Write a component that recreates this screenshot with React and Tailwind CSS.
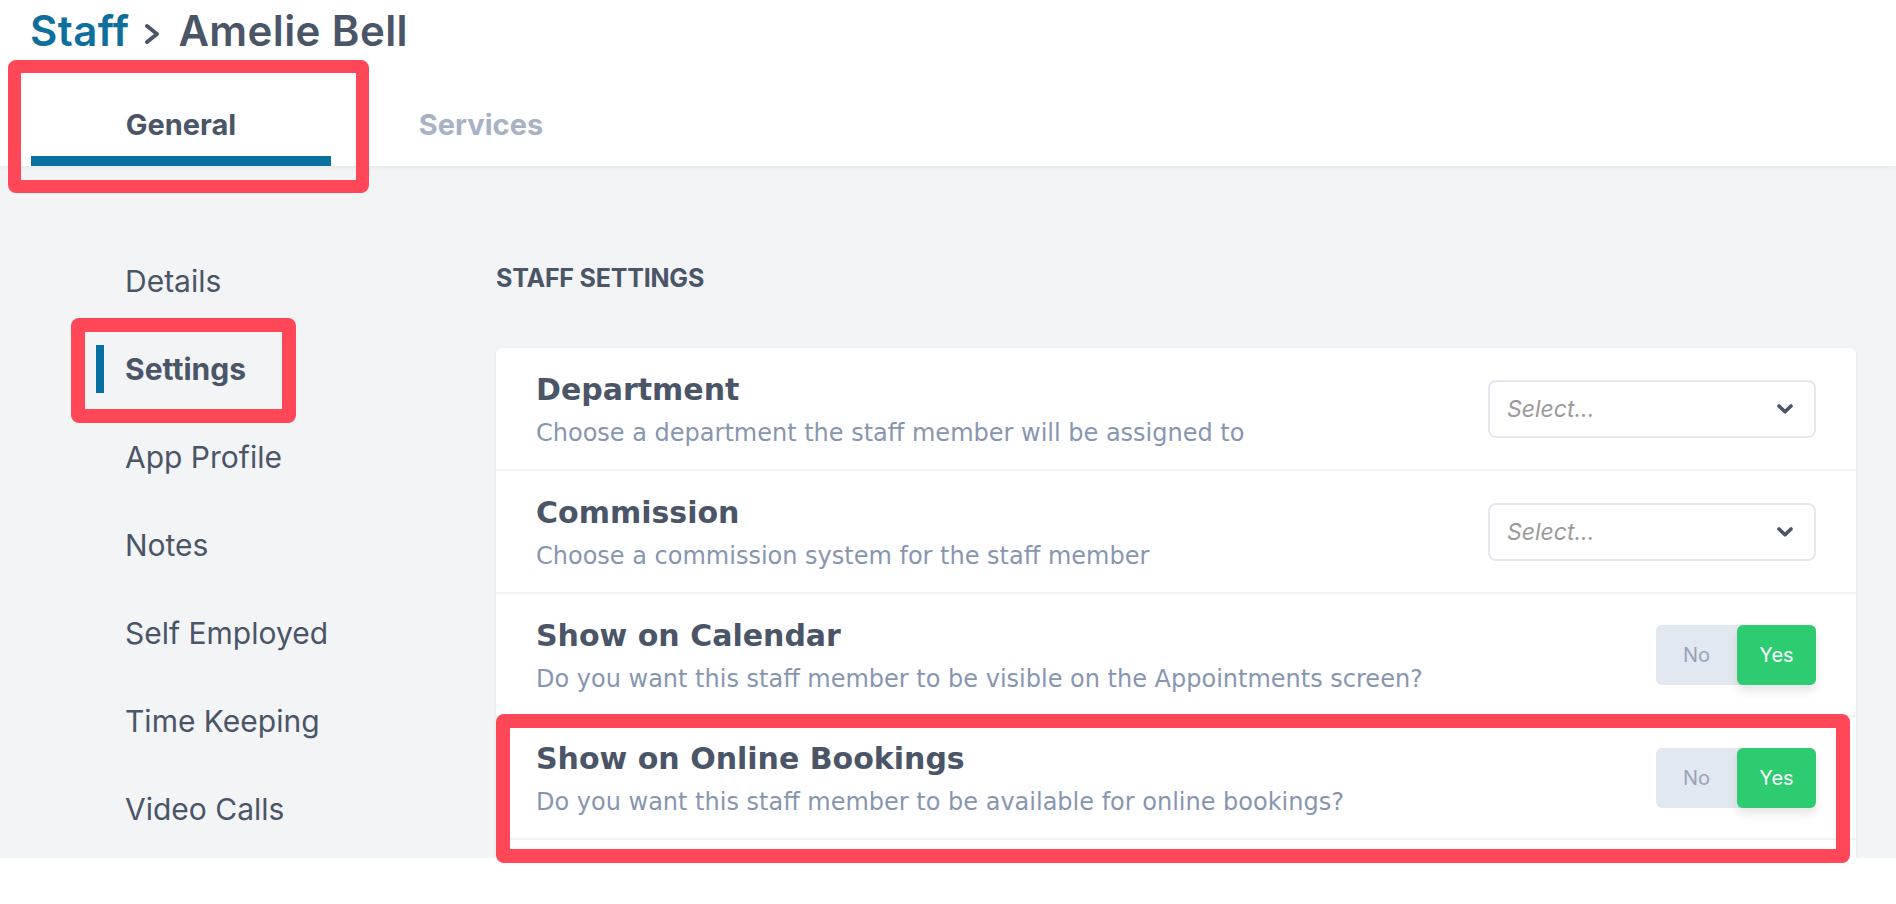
import React from "react";

const sideItems = [
  { label: "Details" },
  { label: "Settings", active: true },
  { label: "App Profile" },
  { label: "Notes" },
  { label: "Self Employed" },
  { label: "Time Keeping" },
  { label: "Video Calls" },
];

const rows = [
  {
    title: "Department",
    desc: "Choose a department the staff member will be assigned to",
    control: "select",
  },
  {
    title: "Commission",
    desc: "Choose a commission system for the staff member",
    control: "select",
  },
  {
    title: "Show on Calendar",
    desc: "Do you want this staff member to be visible on the Appointments screen?",
    control: "toggle",
  },
  {
    title: "Show on Online Bookings",
    desc: "Do you want this staff member to be available for online bookings?",
    control: "toggle",
  },
];

function Chevron() {
  return (
    <svg width="18" height="12" viewBox="0 0 18 12" fill="none">
      <polyline
        points="3,3 9,8.8 15,3"
        stroke="#4a5568"
        strokeWidth="3.6"
        strokeLinecap="round"
        strokeLinejoin="round"
      />
    </svg>
  );
}

function SelectBox() {
  return (
    <div className="w-[328px] h-[58px] border-2 border-[#e5e9ef] rounded-[8px] bg-white flex items-center justify-between pl-[17px] pr-[20px]">
      <span className="font-['Inter',sans-serif] italic text-[23px] leading-[24px] text-[#9a9a9a]">
        Select...
      </span>
      <Chevron />
    </div>
  );
}

function Toggle() {
  return (
    <div className="w-[160px] h-[60px] rounded-[6px] bg-[#e2e8f0] flex font-['Inter',sans-serif] text-[20px]">
      <div className="w-[81px] h-full flex items-center justify-center text-[#97a3ba]">No</div>
      <div className="w-[79px] h-full flex items-center justify-center rounded-[6px] bg-[#2ecc71] text-white shadow-[0_6px_10px_rgba(0,0,0,0.10)]">
        Yes
      </div>
    </div>
  );
}

export default function App() {
  return (
    <div className="relative w-[1896px] h-[904px] bg-white overflow-hidden">
      {/* Header with breadcrumb and tabs */}
      <div className="relative z-10 h-[166px] bg-white shadow-[0_2px_6px_rgba(0,0,0,0.05)] flex flex-col font-['Inter',sans-serif]">
        <div className="pt-[10px] pl-[30px] flex items-start h-[51px]">
          <span className="text-[42px] leading-[42px] font-semibold tracking-[0.4px] text-[#0e6f9c]">Staff</span>
          <svg className="mt-[13px] ml-[15px] mr-[18px]" width="16" height="22" viewBox="0 0 16 22" fill="none">
            <polyline
              points="3,3 13,11 3,19"
              stroke="#4a5568"
              strokeWidth="4"
              strokeLinecap="round"
              strokeLinejoin="round"
            />
          </svg>
          <span className="text-[42px] leading-[42px] font-semibold tracking-[0.4px] text-[#4a5568]">Amelie Bell</span>
        </div>
        <div className="flex pl-[31px] h-[115px]">
          <div className="w-[300px] h-full flex flex-col items-center justify-end">
            <span className="text-[29px] leading-[29px] font-bold text-[#4a5568] mb-[17px]">General</span>
            <div className="w-full h-[10px] bg-[#0770a0]" />
          </div>
          <div className="w-[300px] h-full flex flex-col items-center justify-end">
            <span className="text-[29px] leading-[29px] font-bold text-[#a7b2c4] mb-[27px]">Services</span>
          </div>
        </div>
      </div>

      {/* Body */}
      <div className="h-[692px] bg-[#f3f4f6] flex overflow-hidden">
        <nav className="w-[496px] shrink-0 pt-[71px] font-['Inter',sans-serif]">
          {sideItems.map((item) => (
            <div
              key={item.label}
              className={
                item.active
                  ? "h-[88px] flex items-center pl-[96px]"
                  : "h-[88px] flex items-center pl-[125px]"
              }
            >
              {item.active && <div className="w-[8px] h-[48px] bg-[#0770a0] mr-[21px]" />}
              <span
                className={
                  item.active
                    ? "text-[30px] leading-[30px] font-bold text-[#4a5568]"
                    : "text-[30px] leading-[30px] text-[#4a5568]"
                }
              >
                {item.label}
              </span>
            </div>
          ))}
        </nav>

        <main className="flex-1 pr-[40px] pt-[100px]">
          <h2 className="font-['Inter',sans-serif] font-bold text-[25px] leading-[25px] text-[#4a5568] tracking-[-0.2px]">
            STAFF SETTINGS
          </h2>
          <div className="mt-[57px] bg-white rounded-[6px] shadow-[0_1px_4px_rgba(0,0,0,0.06)] font-['DejaVu_Sans',sans-serif]">
            {rows.map((row) => (
              <div
                key={row.title}
                className="h-[123px] border-b-2 border-[#f0f2f5] px-[40px] flex items-center justify-between"
              >
                <div className="flex flex-col pt-[2px]">
                  <span className="text-[30px] leading-[30px] font-bold text-[#4a5568]">{row.title}</span>
                  <span className="mt-[16px] text-[24px] leading-[24px] text-[#8796b0]">{row.desc}</span>
                </div>
                {row.control === "select" ? <SelectBox /> : <Toggle />}
              </div>
            ))}
            <div className="h-[60px]" />
          </div>
        </main>
      </div>

      {/* Highlight frames */}
      <div className="absolute z-20 left-[8px] top-[60px] w-[361px] h-[133px] border-[13px] border-[#ff4757] rounded-[8px] pointer-events-none" />
      <div className="absolute z-20 left-[71px] top-[318px] w-[225px] h-[105px] border-[14px] border-[#ff4757] rounded-[8px] pointer-events-none" />
      <div className="absolute z-20 left-[496px] top-[714px] w-[1354px] h-[149px] border-[14px] border-[#ff4757] rounded-[8px] pointer-events-none" />
    </div>
  );
}
